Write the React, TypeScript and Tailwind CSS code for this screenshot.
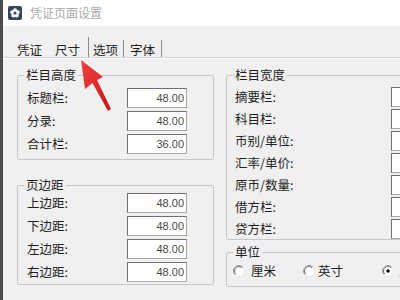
import React from 'react';

const heightRows = [
  ['标题栏:', '48.00'],
  ['分录:', '48.00'],
  ['合计栏:', '36.00'],
];

const marginRows = [
  ['上边距:', '48.00'],
  ['下边距:', '48.00'],
  ['左边距:', '48.00'],
  ['右边距:', '48.00'],
];

const widthRows = ['摘要栏:', '科目栏:', '币别/单位:', '汇率/单价:', '原币/数量:', '借方栏:', '贷方栏:'];

function NumBox({ value }: { value?: string }) {
  return (
    <div className="w-[60px] h-[20px] shrink-0 bg-white border border-[#a8a8a8] border-t-[#6f6f6f] border-l-[#6f6f6f] flex items-center justify-end pr-[2px] text-[11px] leading-none text-[#4a4a4a] font-['Liberation_Sans',sans-serif]">
      {value}
    </div>
  );
}

function Radio({ checked }: { checked?: boolean }) {
  return (
    <svg width="12" height="12" viewBox="0 0 12 12" className="shrink-0">
      <circle cx="6" cy="6" r="5.5" fill="#fff" />
      <path d="M9.9 2.1 A5.5 5.5 0 0 0 2.1 9.9" stroke="#a0a0a0" fill="none" />
      <path d="M9.2 2.8 A4.5 4.5 0 0 0 2.8 9.2" stroke="#6a6a6a" fill="none" />
      <path d="M9.9 2.1 A5.5 5.5 0 0 1 2.1 9.9" stroke="#e6e6e6" fill="none" />
      {checked && <circle cx="6" cy="6" r="1.8" fill="#111" />}
    </svg>
  );
}

function Group({ title, children, className }: { title: string; children: React.ReactNode; className?: string }) {
  return (
    <fieldset className={`border border-[#c6c6c6] rounded-[2px] p-0 ${className ?? ''}`}>
      <legend className="ml-[6px] px-[2px] text-[12.5px] leading-[16px] text-[#1e1e1e]">{title}</legend>
      {children}
    </fieldset>
  );
}

export default function App() {
  return (
    <div className="w-[400px] h-[300px] relative overflow-hidden flex bg-[#f0f0f0] font-['Noto_Sans_CJK_SC','Liberation_Sans',sans-serif]">
      <div className="w-[3px] shrink-0 bg-[#4c4c4c]" />
      <div className="flex-1 flex flex-col min-w-0">
        {/* title bar */}
        <div className="h-[26px] bg-white flex items-center pl-[5px] gap-[8px]">
          <svg width="14" height="14" viewBox="0 0 14 14">
            <rect x="0" y="0" width="14" height="14" rx="2" fill="#35475d" />
            <g fill="#fff">
              <circle cx="7" cy="4.2" r="2" />
              <circle cx="9.7" cy="6.2" r="2" />
              <circle cx="8.7" cy="9.4" r="2" />
              <circle cx="5.3" cy="9.4" r="2" />
              <circle cx="4.3" cy="6.2" r="2" />
            </g>
            <circle cx="7" cy="7" r="1.6" fill="#35475d" />
          </svg>
          <span className="text-[12px] leading-none text-[#a9a9a9]">凭证页面设置</span>
        </div>

        {/* tabs */}
        <div className="h-[31px] flex items-end pl-[7px] text-[12.5px] leading-[16px] text-[#1e1e1e]">
          <div className="w-[37px] h-[17px] pl-[7px] pt-[2px]">凭证</div>
          <div className="w-[42px] h-[20px] pl-[8px] pt-[5px] border-r border-[#8c8c8c]">尺寸</div>
          <div className="w-[35px] h-[17px] pl-[4px] pt-[2px] border-r border-[#8c8c8c]">选项</div>
          <div className="w-[38px] h-[17px] pl-[6px] pt-[2px] border-r border-[#8c8c8c]">字体</div>
        </div>
        <div className="h-px bg-[#d6d6d6]" />
        <div className="h-px bg-white" />

        {/* panel */}
        <div className="flex pl-[14px] gap-[12px] text-[12.5px] leading-[16px] text-[#1e1e1e]">
          <div className="w-[197px] shrink-0 flex flex-col">
            <Group title="栏目高度" className="mt-[8px]">
              <div className="flex flex-col gap-[3px] pl-[9px] pt-[5px] pb-[5px]">
                {heightRows.map(([label, value]) => (
                  <div key={label} className="flex items-center">
                    <span className="w-[100px]">{label}</span>
                    <NumBox value={value} />
                  </div>
                ))}
              </div>
            </Group>
            <Group title="页边距" className="mt-[17px]">
              <div className="flex flex-col gap-[3px] pl-[9px] pb-[2px]">
                {marginRows.map(([label, value]) => (
                  <div key={label} className="flex items-center">
                    <span className="w-[100px]">{label}</span>
                    <NumBox value={value} />
                  </div>
                ))}
              </div>
            </Group>
          </div>

          <div className="w-[220px] shrink-0 flex flex-col">
            <Group title="栏目宽度" className="mt-[8px]">
              <div className="flex flex-col gap-[2px] pl-[8px] pt-[4px]">
                {widthRows.map((label) => (
                  <div key={label} className="flex items-center">
                    <span className="w-[156px]">{label}</span>
                    <NumBox />
                  </div>
                ))}
              </div>
            </Group>
            <Group title="单位" className="mt-[4px]">
              <div className="h-[21px] flex items-center pl-[6px] mb-[5px]">
                <div className="w-[70px] flex items-center gap-[6px]">
                  <Radio />
                  <span>厘米</span>
                </div>
                <div className="w-[79px] flex items-center gap-[3px]">
                  <Radio />
                  <span>英寸</span>
                </div>
                <div className="flex items-center gap-[5px]">
                  <Radio checked />
                  <span>点</span>
                </div>
              </div>
            </Group>
          </div>
        </div>
      </div>

      {/* red annotation arrow */}
      <svg className="absolute left-0 top-0 pointer-events-none" width="400" height="300" viewBox="0 0 400 300">
        <defs>
          <linearGradient id="arw" x1="0" y1="0" x2="1" y2="1">
            <stop offset="0" stopColor="#f04040" />
            <stop offset="1" stopColor="#c81818" />
          </linearGradient>
        </defs>
        <polygon
          points="81,60 103,77 97,80 111,109 108,111 92.5,83 85,89"
          fill="url(#arw)"
        />
      </svg>
    </div>
  );
}
